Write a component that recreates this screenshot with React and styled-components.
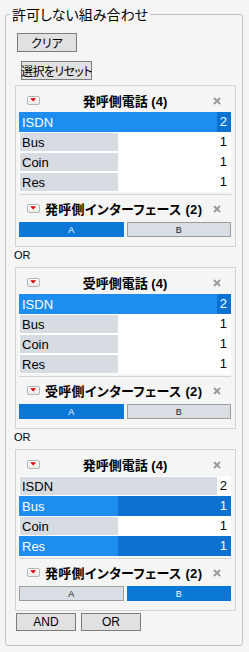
import React from "react";
import styled, { createGlobalStyle } from "styled-components";

const GlobalStyle = createGlobalStyle`
  html, body { margin: 0; padding: 0; background: #f5f5f5; }
  body {
    font-family: "Liberation Sans", "Noto Sans CJK JP", sans-serif;
    color: #000;
    width: 249px;
    height: 652px;
    overflow: hidden;
  }
  * { box-sizing: border-box; }
`;

const Page = styled.div`
  padding: 4px 6px 5px 5px;
`;

const Group = styled.fieldset`
  margin: 0;
  min-width: 0;
  border: 1px solid #c2c2c2;
  border-radius: 3px;
  padding: 9px 6px 14px 9px;
`;

const Legend = styled.legend`
  font-family: "Noto Sans CJK JP", sans-serif;
  font-feature-settings: "palt";
  font-size: 14px;
  line-height: 20px;
  padding: 0 2px;
  margin-left: -5px;
`;

const Tools = styled.div`
  display: flex;
  flex-direction: column;
  align-items: flex-start;
  gap: 9px;
  margin-bottom: 5px;
`;

const PushButton = styled.button`
  display: flex;
  align-items: center;
  justify-content: center;
  width: ${(p) => p.$w}px;
  height: ${(p) => p.$h || 18}px;
  margin: 0 0 0 ${(p) => p.$indent || 0}px;
  padding: 0;
  background: #e1e1e1;
  border: 1px solid #7c7c7c;
  border-radius: 0;
  font-family: "Liberation Sans", "Noto Sans CJK JP", sans-serif;
  font-feature-settings: "palt";
  font-size: 12px;
  letter-spacing: ${(p) => p.$tight || 0}px;
  white-space: nowrap;
  color: #000;
`;

const Card = styled.section`
  display: flex;
  flex-direction: column;
  border: 1px solid #d3d3d3;
  background: #f5f5f5;
  padding: 0 4px 9px 3px;
`;

const CardHeader = styled.div`
  display: grid;
  grid-template-columns: 1fr auto 1fr;
  align-items: center;
  height: 26px;
  padding-top: 3px;
`;

const Title = styled.div`
  font-family: "Liberation Sans", "Noto Sans CJK JP", sans-serif;
  font-weight: bold;
  font-size: 13px;
  white-space: nowrap;
`;

const DropBox = styled.span`
  display: inline-flex;
  justify-self: start;
  width: 13px;
  height: 9px;
  margin-left: 8px;
  border: 1px solid #b5b5b5;
  border-radius: 2px;
  background: linear-gradient(#ffffff, #e9e9e9);
  svg { display: block; }
`;

const CloseBox = styled.span`
  display: inline-flex;
  justify-self: end;
  margin-right: 10px;
  margin-left: auto;
  svg { display: block; }
`;

const List = styled.div`
  display: flex;
  flex-direction: column;
  background: #fff;
`;

const Row = styled.div`
  display: flex;
  height: 20px;
  background: ${(p) => (p.$sel ? "#0b72d2" : "#ffffff")};
`;

const Track = styled.div`
  flex: 1;
  display: flex;
`;

const Bar = styled.div`
  height: ${(p) => (p.$sel ? 20 : 18)}px;
  margin: ${(p) => (p.$sel ? "0" : "1px 0 1px 1px")};
  background: ${(p) => (p.$sel ? "#1e8df0" : "#d7dbe2")};
  display: flex;
  align-items: center;
  overflow: visible;
`;

const Label = styled.span`
  padding-left: ${(p) => (p.$sel ? 3 : 2)}px;
  font-size: 13px;
  white-space: nowrap;
  color: ${(p) => (p.$sel ? "#fff" : "#000")};
`;

const Count = styled.span`
  width: 14px;
  padding-right: 4px;
  text-align: right;
  font-size: 13px;
  line-height: 20px;
  color: ${(p) => (p.$sel ? "#fff" : "#000")};
`;

const Separator = styled.div`
  height: 1px;
  margin-top: 2px;
  background: #d4d4d4;
`;

const SubHeader = styled.div`
  display: flex;
  align-items: center;
  gap: 5px;
  height: 27px;
`;

const SubTitle = styled.div`
  font-family: "Liberation Sans", "Noto Sans CJK JP", sans-serif;
  font-feature-settings: "palt";
  font-weight: bold;
  font-size: 13px;
  letter-spacing: 0.3px;
  white-space: nowrap;
`;

const Choices = styled.div`
  display: grid;
  grid-template-columns: 1fr 1fr;
  gap: 3px;
  height: 15px;
`;

const Choice = styled.div`
  display: flex;
  align-items: center;
  justify-content: center;
  font-size: 9px;
  border: 1px solid ${(p) => (p.$sel ? "#0b78d7" : "#9c9c9c")};
  background: ${(p) => (p.$sel ? "#0b78d7" : "#d9dde4")};
  color: ${(p) => (p.$sel ? "#fff" : "#222")};
`;

const OrLabel = styled.div`
  height: 20px;
  line-height: 16px;
  margin-left: -1px;
  font-size: 11px;
`;

const Bottom = styled.div`
  display: flex;
  gap: 5px;
  margin: 2px 0 0 1px;
`;

const DropIcon = () => (
  <DropBox>
    <svg width="11" height="7" viewBox="0 0 11 7">
      <polygon points="2.2,1.2 8.2,1.2 5.2,4.6" fill="#d40000" />
    </svg>
  </DropBox>
);

const CloseIcon = () => (
  <CloseBox>
    <svg width="8" height="8" viewBox="0 0 8 8">
      <path d="M1 1 L7 7 M7 1 L1 7" stroke="#9b9b9b" strokeWidth="2" />
    </svg>
  </CloseBox>
);

const cards = [
  {
    title: "発呼側電話 (4)",
    rows: [
      { name: "ISDN", n: 2, sel: true },
      { name: "Bus", n: 1 },
      { name: "Coin", n: 1 },
      { name: "Res", n: 1 },
    ],
    sub: "発呼側インターフェース (2)",
    pick: "A",
  },
  {
    title: "受呼側電話 (4)",
    rows: [
      { name: "ISDN", n: 2, sel: true },
      { name: "Bus", n: 1 },
      { name: "Coin", n: 1 },
      { name: "Res", n: 1 },
    ],
    sub: "受呼側インターフェース (2)",
    pick: "A",
  },
  {
    title: "発呼側電話 (4)",
    rows: [
      { name: "ISDN", n: 2 },
      { name: "Bus", n: 1, sel: true },
      { name: "Coin", n: 1 },
      { name: "Res", n: 1, sel: true },
    ],
    sub: "発呼側インターフェース (2)",
    pick: "B",
  },
];

const FilterCard = ({ card }) => {
  const max = Math.max(...card.rows.map((r) => r.n));
  return (
    <Card>
      <CardHeader>
        <DropIcon />
        <Title>{card.title}</Title>
        <CloseIcon />
      </CardHeader>
      <List>
        {card.rows.map((r) => {
          const pct = (r.n / max) * 100;
          return (
            <Row key={r.name} $sel={r.sel}>
              <Track>
                <Bar
                  $sel={r.sel}
                  style={{ width: r.sel ? `${pct}%` : `calc(${pct}% - 1px)` }}
                >
                  <Label $sel={r.sel}>{r.name}</Label>
                </Bar>
              </Track>
              <Count $sel={r.sel}>{r.n}</Count>
            </Row>
          );
        })}
      </List>
      <Separator />
      <SubHeader>
        <DropIcon />
        <SubTitle>{card.sub}</SubTitle>
        <CloseIcon />
      </SubHeader>
      <Choices>
        {["A", "B"].map((c) => (
          <Choice key={c} $sel={card.pick === c}>
            {c}
          </Choice>
        ))}
      </Choices>
    </Card>
  );
};

export default function App() {
  return (
    <>
      <GlobalStyle />
      <Page>
        <Group>
          <Legend>許可しない組み合わせ</Legend>
          <Tools>
            <PushButton $w={60} $h={19} $indent={2}>
              クリア
            </PushButton>
            <PushButton $w={71} $h={19} $indent={6} $tight={-0.6}>
              選択をリセット
            </PushButton>
          </Tools>
          {cards.map((c, i) => (
            <React.Fragment key={i}>
              {i > 0 && <OrLabel>OR</OrLabel>}
              <FilterCard card={c} />
            </React.Fragment>
          ))}
          <Bottom>
            <PushButton $w={60} $h={18}>
              AND
            </PushButton>
            <PushButton $w={60} $h={18}>
              OR
            </PushButton>
          </Bottom>
        </Group>
      </Page>
    </>
  );
}
